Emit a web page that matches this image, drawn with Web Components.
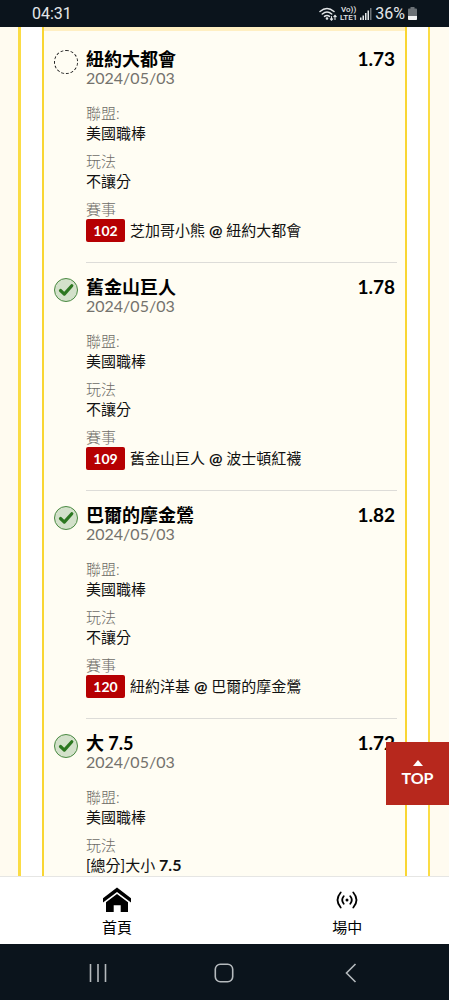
<!DOCTYPE html>
<html lang="zh-Hant">
<head>
<meta charset="utf-8">
<meta name="viewport" content="width=device-width, initial-scale=1">
<title>投注單</title>
<style>
html, body { margin: 0; height: 100%; }
body { font-family: Lato, "Noto Sans CJK TC", sans-serif; color: #111; background: #fff; }
</style>
</head>
<body>
<bet-app></bet-app>
<script>
const define = (name, html, setup) => customElements.define(name, class extends HTMLElement {
  constructor() {
    super();
    this.attachShadow({ mode: "open" }).innerHTML = html;
  }
  connectedCallback() { if (setup) setup(this, this.shadowRoot); }
});

define("status-bar", `
<style>
:host { display: flex; justify-content: space-between; align-items: center; height: 27px; padding: 0 32px; background: #0b141c; color: #e4e7e9; font: 16px/27px Roboto, sans-serif; flex: none; }
.right { display: flex; align-items: center; gap: 3px; }
.lte { font: 500 8px/8px Roboto, sans-serif; text-align: center; }
.lte span { display: block; }
svg { display: block; }
</style>
<span>04:31</span>
<div class="right">
  <svg width="18" height="14" viewBox="0 0 18 14" fill="none" stroke="currentColor" stroke-width="1.5" stroke-linecap="round"><path d="M1 4.500Q8 -1.500 15 4.500M3.300 7Q8 3 12.700 7M5.500 9.400Q8 7.400 10.500 9.400"/><circle cx="8" cy="11.500" r=".6" fill="currentColor"/><path d="M12.500 9.500v3.500m-1.200-1.200l1.200 1.300 1.200-1.300M16 12.500v-4m-1.200 1.200L16 8.400l1.200 1.300" stroke-width="1.100"/></svg>
  <div class="lte"><span>Vo))</span><span>LTE1</span></div>
  <svg width="12" height="12" viewBox="0 0 12 12" fill="currentColor"><path d="M0 9.500h1.500V12H0zM2.500 7.500H4V12H2.500zM5 5h1.500v7H5zM7.500 2.500H9V12H7.500z"/><path d="M10 0h1.500v12H10z" opacity=".45"/></svg>
  <span>36%</span>
  <svg width="9" height="13" viewBox="0 0 9 13"><path d="M2.500 0h4v1.500H8q1 0 1 1V12q0 1-1 1H1q-1 0-1-1V2.500q0-1 1-1h1.500z" fill="#6b7176"/><path d="M0 9h9v3q0 1-1 1H1q-1 0-1-1z" fill="#f2f3f4"/></svg>
</div>`);

define("bet-field", `
<style>
:host { display: block; font-size: 15px; }
.label { color: #6d6b66; font-weight: 300; line-height: 19px; }
.value { color: #111; line-height: 20px; }
</style>
<div class="label"><slot name="label"></slot></div>
<div class="value"><slot></slot></div>`);

define("game-badge", `
<style>
:host { display: inline-block; box-sizing: border-box; width: 39px; margin-right: 5px; border-radius: 2px; background: #b60002; color: #fff; font-size: 14px; font-weight: 700; line-height: 23px; text-align: center; }
</style><slot></slot>`);

define("bet-pick", `
<style>
:host { display: grid; grid-template-columns: 24px 1fr; column-gap: 8px; }
input { appearance: none; box-sizing: border-box; width: 24px; height: 24px; margin: 15px 0 0; border: 1px dashed #222; border-radius: 50%; }
.mark { display: grid; align-content: start; }
.mark > * { grid-area: 1 / 1; }
input:checked { border: 1px solid #4a8a42; background: #d3e1ca; }
svg { display: none; margin-top: 15px; pointer-events: none; }
input:checked + svg { display: block; }
.body { display: flex; flex-direction: column; gap: 9px; padding: 14px 0 20px; border-bottom: 1px solid #dddcd8; }
.head { display: flex; justify-content: space-between; padding-right: 2px; margin-bottom: 8px; }
label { display: block; font-size: 18px; font-weight: 700; line-height: 20px; color: #000; }
.odds { font-size: 19px; font-weight: 700; line-height: 20px; color: #000; }
time { display: block; font-size: 16px; line-height: 18px; color: #74726d; }
</style>
<div class="mark">
  <input type="checkbox" id="pick">
  <svg width="24" height="24" viewBox="0 0 24 24" fill="none" stroke="#2c7720" stroke-width="3.200" stroke-linecap="round" stroke-linejoin="round"><path d="M6.500 12.500l3.800 3.600 7.500-8.300"/></svg>
</div>
<div class="body">
  <div class="head">
    <div><label for="pick"></label><time></time></div>
    <span class="odds"></span>
  </div>
  <slot></slot>
</div>`, (host, root) => {
  root.querySelector("input").checked = host.hasAttribute("checked");
  root.querySelector("label").textContent = host.getAttribute("name");
  root.querySelector("time").textContent = host.getAttribute("date");
  root.querySelector(".odds").textContent = host.getAttribute("odds");
});

define("bet-slip", `
<style>
:host { display: flex; flex: 1; min-height: 0; box-sizing: border-box; padding: 0 19px 0 18px; background: #fffbf0; }
.outer { display: flex; flex: 1; min-width: 0; padding: 0 21px; border: solid #fbdc45; border-width: 0 2px 0 3px; background: #fff; }
.inner { flex: 1; min-width: 0; border: solid #f9d633; border-width: 0 2px; background: #fffdf3; overflow: hidden; }
.list { border-top: 4px solid #ffefc2; padding: 4px 8px 0 10px; }
</style>
<div class="outer"><div class="inner"><div class="list"><slot></slot></div></div></div>`);

define("top-button", `
<style>
:host { position: absolute; right: 0; bottom: 71px; }
button { display: flex; flex-direction: column; align-items: center; justify-content: center; gap: 2px; width: 63px; height: 63px; padding: 0; border: 0; background: #b7281d; color: #fff; font: 700 16px/20px Lato, sans-serif; }
</style>
<button type="button"><svg width="10" height="6" viewBox="0 0 10 6"><path d="M5 0l5 6H0z" fill="#fff"/></svg><span>TOP</span></button>`);

define("tab-link", `
<style>
:host { display: block; }
a { display: flex; flex-direction: column; align-items: center; gap: 2px; padding-top: 9px; color: #000; text-decoration: none; font-size: 15px; line-height: 22px; }
.icon { display: grid; place-items: center; height: 28px; }
</style>
<a href="#"><span class="icon"><slot name="icon"></slot></span><span><slot></slot></span></a>`);

define("tab-bar", `
<style>
:host { display: grid; grid-template-columns: 51.5% 51.5%; flex: none; box-sizing: border-box; height: 68px; padding-left: 2px; overflow: hidden; border-top: 1px solid #e6e6e4; background: #fff; }
svg { display: block; }
</style>
<tab-link><svg slot="icon" width="28" height="26" viewBox="0 0 28 26"><path d="M0 11.200L14 .5l14 10.700v4.200L14 4.900 0 15.400z"/><path d="M14 7l11 8.300V25h-7.300v-6.800h-7V25H3v-9.700z"/></svg>首頁</tab-link>
<tab-link><svg slot="icon" width="22" height="18" viewBox="0 0 22 18" fill="none" stroke="#000" stroke-width="1.800" stroke-linecap="round"><circle cx="11" cy="9" r="1.500" fill="#000" stroke="none"/><path d="M7.700 5.200Q4.700 9 7.700 12.800M14.300 5.200Q17.300 9 14.300 12.800M4.700 1.500Q-1.700 9 4.700 16.500M17.300 1.500Q23.700 9 17.300 16.500"/></svg>場中</tab-link>`);

define("system-nav", `
<style>
:host { display: flex; flex: none; height: 56px; padding: 0 35px; background: #0b141c; }
button { flex: 1; display: grid; place-items: center; padding: 2px 0 0; border: 0; background: none; color: #b5babd; }
</style>
<button type="button" aria-label="最近"><svg width="18" height="18" viewBox="0 0 18 18" fill="none" stroke="currentColor" stroke-width="1.600"><path d="M1.500 0v18M9 0v18M16.500 0v18"/></svg></button>
<button type="button" aria-label="主畫面"><svg width="20" height="20" viewBox="0 0 20 20" fill="none" stroke="currentColor" stroke-width="1.600"><rect x="1.300" y="1.300" width="17.400" height="17.400" rx="5"/></svg></button>
<button type="button" aria-label="返回"><svg width="12" height="20" viewBox="0 0 12 20" fill="none" stroke="currentColor" stroke-width="1.600"><path d="M10.500 1L1.500 10l9 9"/></svg></button>`);

define("bet-app", `
<style>
:host { display: flex; flex-direction: column; height: 100vh; overflow: hidden; }
main { position: relative; display: flex; flex: 1; min-height: 0; }
b { font-size: 16px; font-weight: 700; }
</style>
<status-bar></status-bar>
<main>
  <bet-slip>
    <bet-pick name="紐約大都會" date="2024/05/03" odds="1.73">
      <bet-field><span slot="label">聯盟:</span>美國職棒</bet-field>
      <bet-field><span slot="label">玩法</span>不讓分</bet-field>
      <bet-field><span slot="label">賽事</span><game-badge>102</game-badge>芝加哥小熊<b> @ </b>紐約大都會</bet-field>
    </bet-pick>
    <bet-pick checked name="舊金山巨人" date="2024/05/03" odds="1.78">
      <bet-field><span slot="label">聯盟:</span>美國職棒</bet-field>
      <bet-field><span slot="label">玩法</span>不讓分</bet-field>
      <bet-field><span slot="label">賽事</span><game-badge>109</game-badge>舊金山巨人<b> @ </b>波士頓紅襪</bet-field>
    </bet-pick>
    <bet-pick checked name="巴爾的摩金鶯" date="2024/05/03" odds="1.82">
      <bet-field><span slot="label">聯盟:</span>美國職棒</bet-field>
      <bet-field><span slot="label">玩法</span>不讓分</bet-field>
      <bet-field><span slot="label">賽事</span><game-badge>120</game-badge>紐約洋基<b> @ </b>巴爾的摩金鶯</bet-field>
    </bet-pick>
    <bet-pick checked name="大 7.5" date="2024/05/03" odds="1.72">
      <bet-field><span slot="label">聯盟:</span>美國職棒</bet-field>
      <bet-field><span slot="label">玩法</span>[總分]大小<b> 7.5</b></bet-field>
    </bet-pick>
  </bet-slip>
  <top-button></top-button>
</main>
<tab-bar></tab-bar>
<system-nav></system-nav>`);
</script>
</body>
</html>
